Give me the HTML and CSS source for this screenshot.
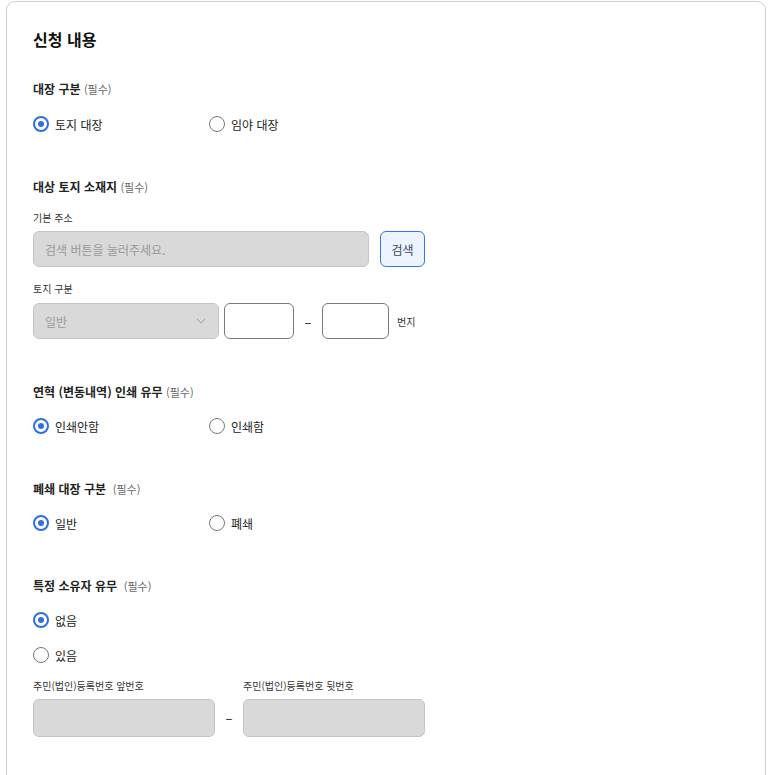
FILE: index.html
```html
<!DOCTYPE html>
<html lang="ko">
<head>
<meta charset="utf-8">
<title>신청 내용</title>
<link rel="stylesheet" href="styles.css">
</head>
<body>
<div class="page">
  <div class="card">
    <h2 class="card-title">신청 내용</h2>

    <section class="sec sec-first">
      <div class="sec-label">대장 구분 <span class="req">(필수)</span></div>
      <div class="radio-row">
        <label class="radio"><span class="dot on"></span>토지 대장</label>
        <label class="radio"><span class="dot"></span>임야 대장</label>
      </div>
    </section>

    <section class="sec">
      <div class="sec-label">대상 토지 소재지 <span class="req">(필수)</span></div>
      <div class="sub-label">기본 주소</div>
      <div class="addr-row">
        <div class="field field-gray addr-input"><span class="ph">검색 버튼을 눌러주세요.</span></div>
        <button class="btn-search">검색</button>
      </div>
      <div class="sub-label lot-label">토지 구분</div>
      <div class="lot-row">
        <div class="field field-gray select"><span class="ph">일반</span>
          <svg class="chev" width="10" height="6" viewBox="0 0 10 6"><path d="M1 1l4 4 4-4" fill="none" stroke="#9a9a9a" stroke-width="1"/></svg>
        </div>
        <div class="field field-white num1"></div>
        <span class="dash">–</span>
        <div class="field field-white num2"></div>
        <span class="unit">번지</span>
      </div>
    </section>

    <section class="sec">
      <div class="sec-label">연혁 (변동내역) 인쇄 유무 <span class="req">(필수)</span></div>
      <div class="radio-row">
        <label class="radio"><span class="dot on"></span>인쇄안함</label>
        <label class="radio"><span class="dot"></span>인쇄함</label>
      </div>
    </section>

    <section class="sec">
      <div class="sec-label">폐쇄 대장 구분 &nbsp;<span class="req">(필수)</span></div>
      <div class="radio-row">
        <label class="radio"><span class="dot on"></span>일반</label>
        <label class="radio"><span class="dot"></span>폐쇄</label>
      </div>
    </section>

    <section class="sec">
      <div class="sec-label">특정 소유자 유무 &nbsp;<span class="req">(필수)</span></div>
      <div class="radio-col">
        <label class="radio"><span class="dot on"></span>없음</label>
        <label class="radio"><span class="dot"></span>있음</label>
      </div>
      <div class="id-row">
        <div class="id-col">
          <div class="sub-label">주민(법인)등록번호 앞번호</div>
          <div class="field field-gray id-input"></div>
        </div>
        <span class="dash id-dash">–</span>
        <div class="id-col">
          <div class="sub-label">주민(법인)등록번호 뒷번호</div>
          <div class="field field-gray id-input"></div>
        </div>
      </div>
    </section>
  </div>
</div>
</body>
</html>
```

FILE: styles.css
```css
* { box-sizing: border-box; }
html, body { margin: 0; padding: 0; background: #fff; }
body {
  font-family: "Noto Sans CJK KR", "Noto Sans", "Liberation Sans", sans-serif;
  color: #222;
}
.page { padding: 1px 6px 0 6px; }
.card {
  border: 1px solid #cfcfcf;
  border-radius: 9px;
  padding: 25px 26px 60px 26px;
  min-height: 800px;
  background: #fff;
}
.card-title {
  margin: 0;
  font-size: 16px;
  line-height: 24px;
  height: 24px;
  font-weight: 700;
  color: #111;
}
.sec { margin-top: 43px; }
.sec.sec-first { margin-top: 28px; }
.sec-label {
  display: flex;
  align-items: center;
  white-space: pre;
  height: 20px;
  font-size: 12px;
  line-height: 20px;
  font-weight: 700;
  color: #222;
}
.req { font-size: 11px; line-height: 20px; font-weight: 400; color: #666; }
.radio-row { display: flex; margin-top: 14px; }
.sec-first .radio-row { margin-top: 15px; }
.radio-row .radio { width: 176px; }
.radio-col { display: flex; flex-direction: column; gap: 15px; margin-top: 14px; }
.radio {
  display: flex;
  align-items: center;
  height: 20px;
  font-size: 12px;
  color: #222;
}
.dot {
  width: 16px; height: 16px;
  border-radius: 50%;
  border: 1px solid #777;
  margin-right: 6px;
  position: relative;
  flex: none;
}
.dot.on { border: 2px solid #2f6fe4; }
.dot.on::after {
  content: "";
  position: absolute;
  left: 3px; top: 3px;
  width: 6px; height: 6px;
  border-radius: 50%;
  background: #2f6fe4;
}
.sub-label {
  font-size: 10px;
  line-height: 16px;
  height: 16px;
  color: #333;
  margin-top: 13px;
}
.sub-label.lot-label { margin-top: 14px; }
.field {
  height: 36px;
  border-radius: 6px;
  display: flex;
  align-items: center;
}
.field-gray { background: #d9d9d9; border: 1px solid #c4c4c4; }
.field-white { background: #fff; border: 1px solid #7a7a7a; }
.ph { font-size: 12px; color: #999; padding-left: 11px; }
.addr-row { display: flex; gap: 11px; margin-top: 5px; }
.addr-input { width: 336px; }
.btn-search {
  width: 45px; height: 36px;
  border: 1px solid #3477e6;
  background: #eef4ff;
  border-radius: 6px;
  font-family: inherit;
  font-size: 12px;
  color: #3a4a66;
  padding: 0;
}
.lot-row { display: flex; align-items: center; margin-top: 6px; margin-bottom: 1px; }
.select { width: 186px; justify-content: space-between; padding-right: 12px; }
.num1 { width: 70px; margin-left: 5px; }
.num2 { width: 67px; }
.dash { width: 28px; text-align: center; font-size: 13px; color: #222; }
.unit { font-size: 10px; color: #333; margin-left: 8px; }
.id-row { display: flex; align-items: flex-end; }
.id-col { width: 182px; }
.sec .id-col .sub-label { margin-top: 13px; }
.id-input { height: 38px; margin-top: 5px; }
.id-dash { width: 28px; height: 38px; line-height: 38px; }
```
